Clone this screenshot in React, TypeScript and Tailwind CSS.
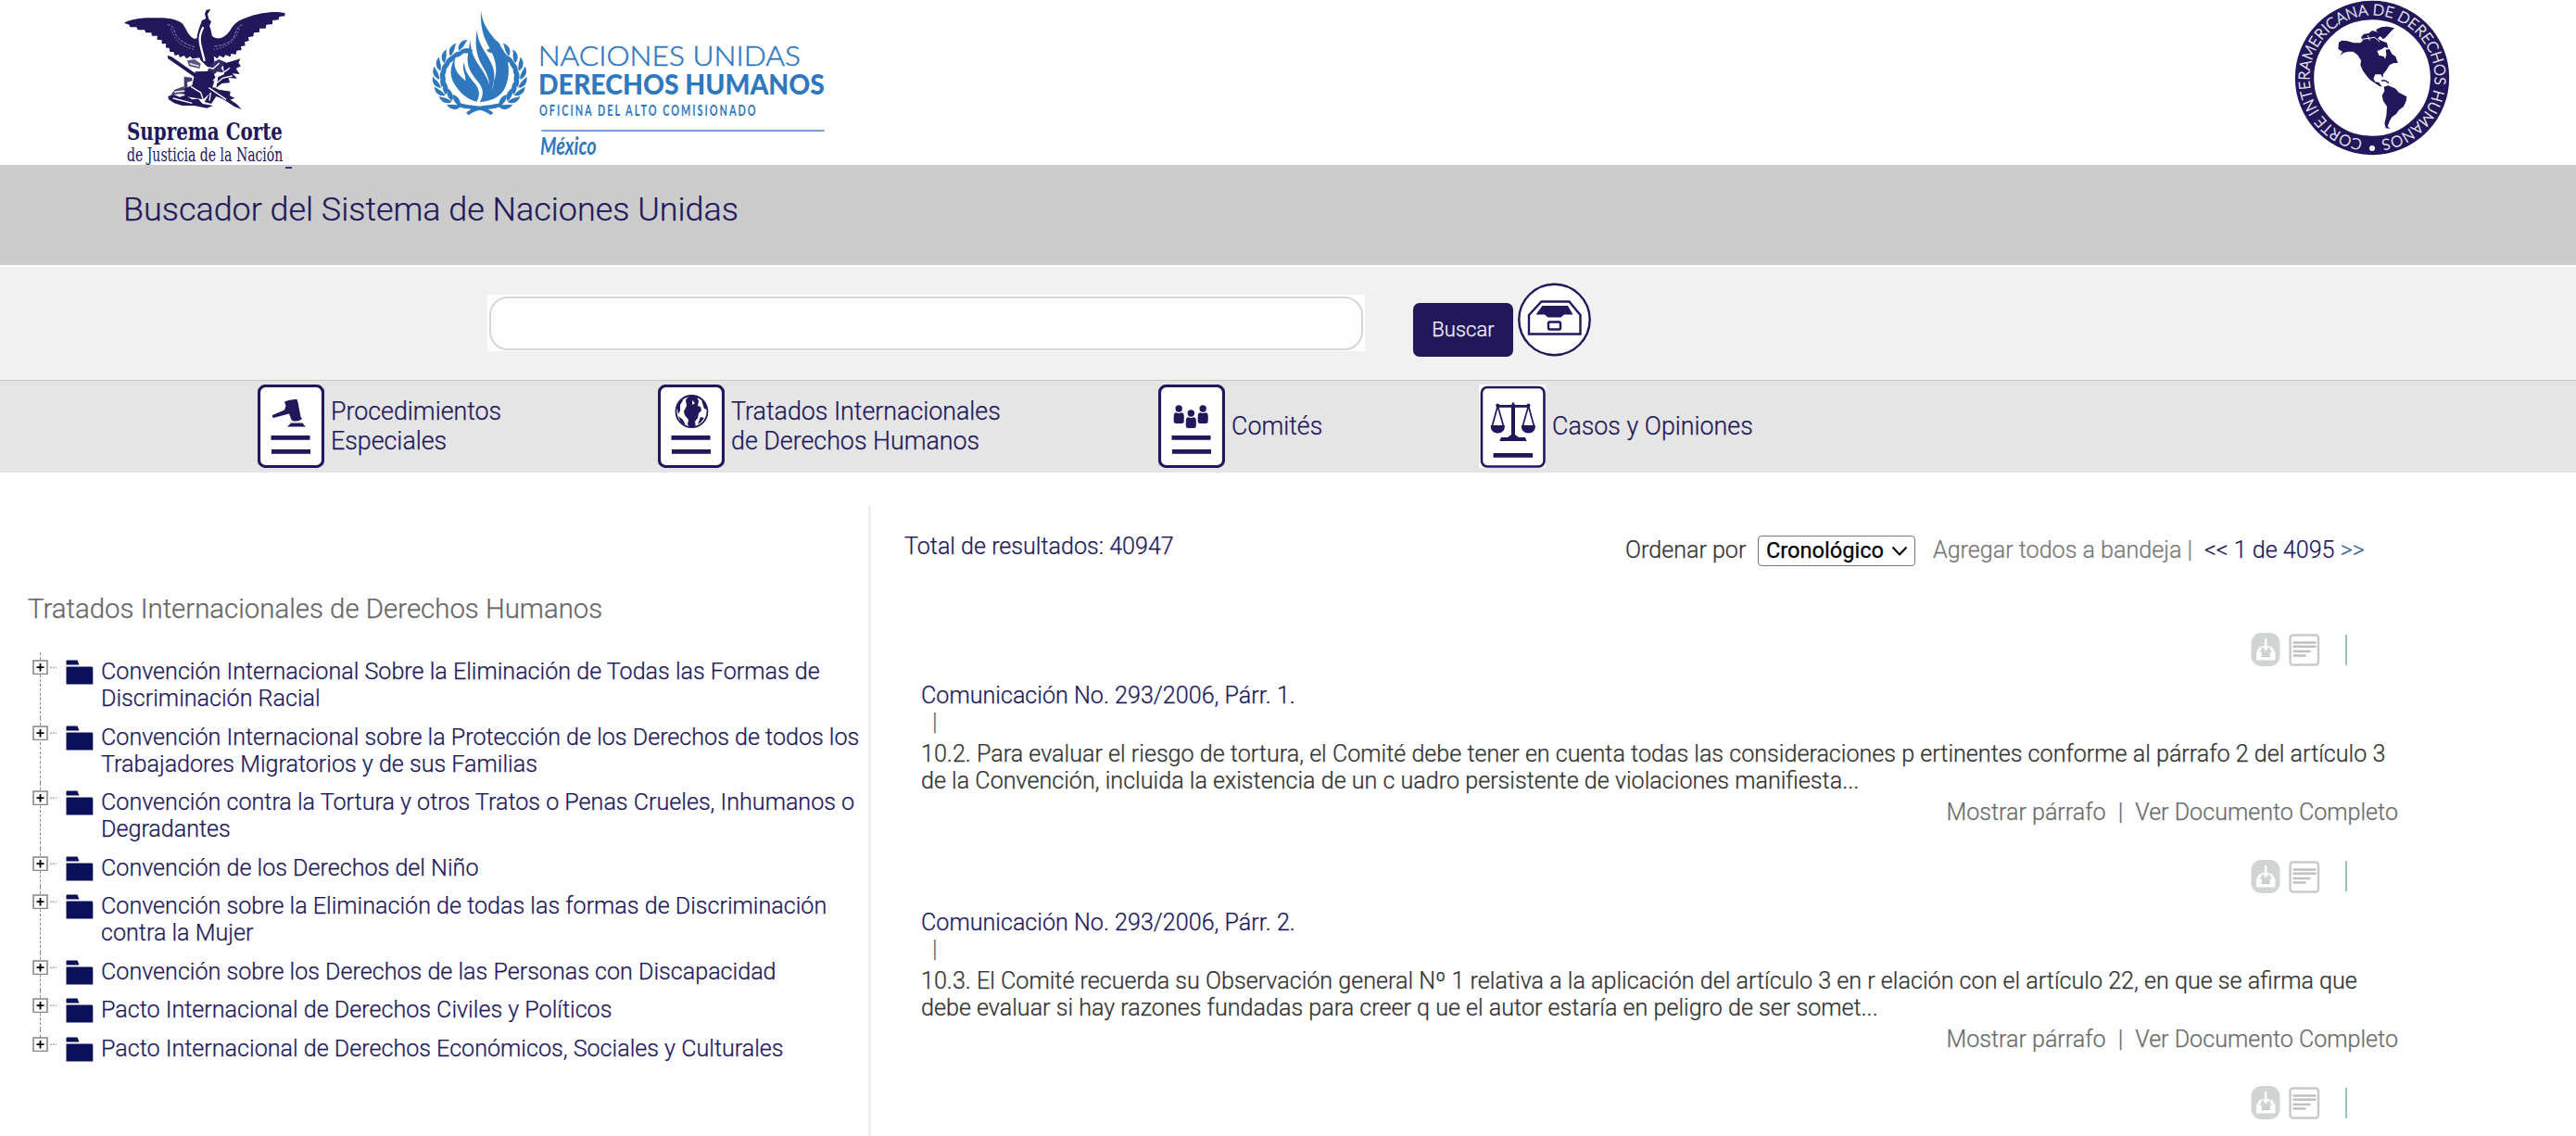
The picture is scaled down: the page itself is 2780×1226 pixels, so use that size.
import React from "react";

const NAVY = "#21175a";
const UN_BLUE = "#2f78bd";

function EagleLogo() {
  return (
    <svg className="block h-[178px] w-[200px] overflow-visible" viewBox="0 0 600 534" fill={NAVY}>
      <path d="M42,74 C60,62 100,56 150,58 C185,58 215,62 232,78 C242,92 246,106 256,116 C268,130 280,128 288,112 L292,186 L262,190 L256,182 L244,190 L236,180 L222,186 L218,176 L206,180 L202,168 L190,168 L188,156 L176,154 L178,142 L164,142 L164,130 L148,128 L150,116 L132,116 L130,106 L112,106 L108,97 L86,97 L82,88 L62,88 L58,80Z" />
      <path d="M563,43 C530,34 480,42 440,56 C412,66 396,76 388,94 C380,108 368,120 352,124 C338,126 326,120 320,108 L326,178 L344,190 L350,180 L364,187 L370,178 L386,184 L388,174 L404,176 L406,164 L422,162 L420,150 L434,148 L432,136 L446,132 L444,120 L460,118 L462,106 L480,104 L480,92 L500,92 L502,80 L522,78 L522,66 L542,64 L544,54 L562,52Z" />
      <path d="M322,30 L308,32 L303,44 L307,60 L294,66 L286,88 C274,120 272,160 290,196 L318,222 L334,198 C330,160 330,110 318,84 L324,70 L316,62 L312,46Z" />
      <path d="M298,88 C276,130 292,150 302,198" fill="none" stroke="#fff" strokeWidth="7" />
      <g fill="none" stroke="#8f88b2" strokeWidth="3">
        <path d="M182,80 C210,82 200,110 220,126 C236,140 250,146 270,152" strokeDasharray="10 4" />
        <path d="M194,92 C204,130 226,150 268,160" strokeDasharray="5 5" />
        <path d="M424,80 C398,90 408,116 386,132 C372,144 356,148 334,150" strokeDasharray="10 4" />
        <path d="M414,92 C404,132 376,154 332,160" strokeDasharray="5 5" />
      </g>
      <path d="M182,180 L196,184 L276,240 L270,250 L184,190Z" />
      <path d="M272,232 L326,230 L338,250 L322,300 L298,322 L240,312 L232,290 L262,276Z" />
      <path d="M236,248 L262,252 L262,262 L246,266 L248,286 L236,290Z" fillOpacity=".85" />
      <path d="M184,312 L202,306 L222,314 L240,308 L262,322 L282,320 L296,336 L330,342 L310,350 L268,342 L230,342 L204,334 L186,322Z" />
      <path d="M206,290 L234,280 L244,306 L220,304 L192,308Z" fillOpacity=".8" />
      <path d="M246,196 L270,192 L290,206 L286,222 L252,214Z" fillOpacity=".75" />
      <path d="M326,204 L348,192 L372,202 L356,220 L366,236 L344,232 L322,250 L312,228Z" fillOpacity=".9" />
      <path d="M362,206 L384,200 L418,190 L412,204 L420,214 L404,222 L416,240 L392,238 L408,254 L380,252 L384,268 L358,270 L340,284 L346,250 L366,240Z" />
      <path d="M332,282 L348,290 L386,296 L384,310 L400,318 L376,326 L340,312 L324,336 L302,330 L318,304Z" />
      <path d="M318,276 L408,338 L422,354 L400,346 L312,288Z" />
      <path
        d="M258,280 L290,300 L300,330 M316,284 L372,322 M330,262 C346,240 360,240 384,220 M254,206 L284,214 M298,216 L330,222 L350,204 M340,270 L362,252 L392,246 M204,298 L238,294 M200,318 L262,334 M322,300 L318,326"
        fill="none"
        stroke="#fff"
        strokeWidth="4"
      />
      <text x="51" y="452" textLength="504" lengthAdjust="spacingAndGlyphs" fontSize="78" fontWeight="700" fontFamily="DejaVu Serif, serif">Suprema Corte</text>
      <text x="51" y="521" textLength="505" lengthAdjust="spacingAndGlyphs" fontSize="62" fontWeight="400" fontFamily="DejaVu Serif, serif">de Justicia de la Nación</text>
    </svg>
  );
}

const LAUREL = [-62, -47, -32, -17, -2, 13, 28, 43, 58];

function LaurelBranch() {
  return (
    <g>
      {LAUREL.map((a) => {
        const t = (a * Math.PI) / 180;
        const x = -Math.cos(t) * 134;
        const y = Math.sin(t) * 108;
        return (
          <g key={a} transform={`translate(${x} ${y}) rotate(${-a})`}>
            <path d="M4,8 C-18,2 -22,-18 -14,-34 C-8,-20 2,-14 4,8Z" />
            <path d="M6,6 C2,-14 10,-26 24,-34 C28,-18 22,0 6,6Z" />
          </g>
        );
      })}
      <path d="M-74,88 C-40,110 0,90 36,120 L44,112 C10,82 -30,94 -74,78Z" />
    </g>
  );
}

function UnLogo() {
  return (
    <svg className="block h-[178px] w-[434px] overflow-visible" viewBox="1030 0 1302 534" fill={UN_BLUE}>
      <g transform="translate(1194 253)">
        <LaurelBranch />
        <g transform="scale(-1 1)">
          <LaurelBranch />
        </g>
      </g>
      <path d="M1198,33 C1203,95 1248,125 1272,165 C1296,210 1290,262 1272,292 C1256,318 1225,328 1194,331 C1225,310 1240,288 1240,262 C1254,230 1246,190 1226,155 C1206,120 1196,90 1198,33Z" />
      <path d="M1185,97 C1188,150 1226,180 1238,222 C1246,250 1238,270 1234,290 L1222,300 C1232,262 1216,236 1202,212 C1182,180 1178,140 1185,97Z" />
      <path d="M1164,128 C1163,180 1190,206 1208,236 C1222,260 1228,275 1226,290 L1244,300 L1194,331 C1212,300 1202,280 1186,262 C1166,236 1150,215 1156,176 C1158,158 1162,145 1164,128Z" />
      <path d="M1115,185 C1106,225 1124,240 1148,262 C1150,238 1134,228 1144,202 C1146,236 1162,250 1180,272 C1196,292 1194,312 1184,329 C1150,322 1122,292 1106,260 C1094,232 1104,205 1115,185Z" />
      <text x="1383" y="212" textLength="850" lengthAdjust="spacingAndGlyphs" fontSize="91" fontWeight="300" stroke={UN_BLUE} strokeWidth="1.5" fontFamily="Lato, sans-serif">NACIONES UNIDAS</text>
      <text x="1384" y="305" textLength="927" lengthAdjust="spacingAndGlyphs" fontSize="90" fontWeight="900" fontFamily="Lato, sans-serif">DERECHOS HUMANOS</text>
      <g transform="translate(1387 376) scale(.64 1)">
        <text textLength="1095" fontSize="51" fontWeight="700" fontFamily="Lato, sans-serif">OFICINA DEL ALTO COMISIONADO</text>
      </g>
      <rect x="1394" y="421" width="916" height="4" />
      <text x="1390" y="502" textLength="182" lengthAdjust="spacingAndGlyphs" fontSize="78" fontWeight="700" fontStyle="italic" fontFamily="Lato, sans-serif">México</text>
    </svg>
  );
}

const AMERICAS_NORTH =
  "M252,138 L262,132 L280,134 L300,140 L322,140 L330,132 L324,122 L332,112 L350,108 L360,100 L374,104 L388,116 L378,126 L392,134 L408,140 L412,156 L400,154 L392,160 L376,166 L382,180 L398,184 L402,192 L406,178 L404,162 L416,160 L424,176 L436,184 L440,196 L444,204 L428,206 L416,212 L406,228 L396,240 L394,254 L388,242 L370,242 L364,256 L370,266 L382,268 L392,282 L384,280 L366,268 L352,258 L340,244 L330,230 L322,212 L324,196 L312,178 L298,168 L282,168 L268,172 L256,180 L264,168 L250,160Z";
const AMERICAS_SOUTH =
  "M398,282 L412,278 L436,288 L446,300 L472,314 L470,328 L462,346 L446,358 L438,370 L424,380 L416,394 L410,410 L418,418 L404,416 L400,400 L406,376 L408,346 L396,328 L392,310 L400,296Z";

function CourtSeal() {
  return (
    <svg className="block h-[170px] w-[170px] overflow-visible" viewBox="105 -2 510 510">
      <circle cx="360" cy="253" r="219" fill="none" stroke={NAVY} strokeWidth="61" />
      <path d={AMERICAS_NORTH} fill={NAVY} />
      <path d={AMERICAS_SOUTH} fill={NAVY} />
      <path d="M372,98 C390,84 412,86 432,92 L420,104 L404,122 L396,128 L382,114Z" fill={NAVY} />
      <path d="M390,262 L402,262 L414,270" fill="none" stroke={NAVY} strokeWidth="4" />
      <path d="M328,128 L368,122 L384,136 M346,116 L352,132" fill="none" stroke="#fff" strokeWidth="3" />
      <path id="seal-ring" d="M360,456 A203,203 0 0 1 360,50 A203,203 0 0 1 360,456" fill="none" />
      <text fontSize="49" fontFamily="Lato, sans-serif" fill="#e9e7f0" stroke="#e9e7f0" strokeWidth="1.5">
        <textPath href="#seal-ring" startOffset="31" textLength="1215">CORTE INTERAMERICANA DE DERECHOS HUMANOS</textPath>
      </text>
      <circle cx="360" cy="481" r="9" fill="#fff" />
    </svg>
  );
}

function DocFrame({ children }: { children: React.ReactNode }) {
  return (
    <svg className="block h-[90px] w-[72px] shrink-0" viewBox="0 0 72 90" fill={NAVY}>
      <rect x="1.5" y="1.5" width="69" height="87" rx="7" fill="#fff" stroke={NAVY} strokeWidth="3.2" />
      {children}
      <rect x="14.5" y="55" width="42" height="4.8" />
      <rect x="15" y="70" width="42" height="4.8" />
    </svg>
  );
}

function GavelIcon() {
  return (
    <DocFrame>
      <path d="M16,33 L29,27.5 L30.5,23 L29,18.5 Q35,15.5 42.5,16 L43.5,19 L46.5,35 L48,37 Q45,40 38.5,39.5 L36.5,38 L34,31.500 L17,36 Q15.5,35 16,33Z" />
      <path d="M36,41.5 H48.5 L49.5,43 L52,45.5 H32 L34.5,43Z" />
    </DocFrame>
  );
}

function GlobeIcon() {
  return (
    <DocFrame>
      <circle cx="36.5" cy="29" r="17" fill="#fff" stroke={NAVY} strokeWidth="1.8" />
      <path d="M36,12 L42,13 L44,18 L43,23 L46,24 L47,28 L44,31 L43,36 L40,40 L41,46 L34,46 L32,43 L33,38 L29,33 L28,29 L31,23 L30,17 L32,14Z" />
      <path d="M20.5,24 L25,15 L27,17 L24,22 L24,28 L22,32Z M22,34 L27,38 L30,44 L25,41Z M47,17 L51,20 L53,27 L50,26Z M46,35 L50,36 L46,41 L43,43Z" />
      <path d="M37,17 L40,20 L37,22Z" fill="#fff" />
    </DocFrame>
  );
}

function Person({ x, y }: { x: number; y: number }) {
  return (
    <g transform={`translate(${x} ${y})`}>
      <circle cx="0" cy="0" r="3.7" />
      <path d="M-5.500,14 V8 Q-5.5,4.5 -2.5,4.2 Q0,6 2.5,4.2 Q5.5,4.5 5.5,8 V14 Q5.5,16 3,16 H-3 Q-5.5,16 -5.5,14Z" />
    </g>
  );
}

function CommitteeIcon() {
  return (
    <DocFrame>
      <Person x={22.2} y={26} />
      <Person x={48.2} y={26} />
      <Person x={35.3} y={31} />
    </DocFrame>
  );
}

function ScalesIcon() {
  return (
    <svg className="block h-[90px] w-[72px] shrink-0 bg-white" viewBox="0 0 72 90" fill={NAVY}>
      <rect x="3" y="3" width="67.5" height="85.5" rx="6" fill="#fff" stroke={NAVY} strokeWidth="2.6" />
      <path d="M35,22 L37,18.5 L39,22 V54 L43,57 H50 L51.5,61 H22.3 L24,57 H31 L35,54Z" />
      <rect x="19" y="22" width="36" height="2.8" />
      <path d="M20.3,23 L14.3,45 M20.3,23 L26.6,45 M53.5,23 L47.3,45 M53.5,23 L59.5,45" fill="none" stroke={NAVY} strokeWidth="1.7" />
      <circle cx="20.3" cy="22.5" r="2" />
      <circle cx="53.5" cy="22.5" r="2" />
      <path d="M12.7,44 H28 Q28,52.5 20.3,52.5 Q12.7,52.5 12.7,44Z M45.8,44 H61 Q61,52.5 53.5,52.5 Q45.8,52.5 45.8,44Z" />
      <rect x="15.6" y="74" width="42.5" height="4.8" />
    </svg>
  );
}

function TrayIcon() {
  return (
    <svg className="block h-[80px] w-[80px]" viewBox="0 0 80 80" fill="none" stroke={NAVY} strokeWidth="2.4">
      <circle cx="39.5" cy="40" r="38.2" fill="#fff" />
      <path d="M12,35 L25.5,20.5 H55.5 L67.5,35 V55.5 H12Z" />
      <path d="M26.5,25 H54 L59.5,34.5 H50 L46.5,37.5 H32.5 L29,34.5 H19.5Z" fill={NAVY} stroke="none" />
      <rect x="33" y="42.5" width="13" height="8" rx="1.5" />
    </svg>
  );
}

function ResultIcons() {
  return (
    <div className="flex h-[36px] items-center pl-[1489px]">
      <svg className="h-[36px] w-[32px]" viewBox="0 0 32 36">
        <rect x="0.5" y="0" width="31" height="36" rx="11" fill="#d0d5d4" />
        <path d="M9.5,15 L6,21 V29.5 H26.5 V21 L23,15 H20 L22.5,21 H20.5 V25 H12 V21 H9.5 L12.5,15Z" fill="#fff" />
        <path d="M15,6 H17.5 V14 H20.5 L16.3,19.5 L12,14 H15Z" fill="#fff" />
        <path d="M11.5,23 H21 M11.5,25.5 H21" stroke="#c0c6c5" strokeWidth="1.2" />
      </svg>
      <svg className="ml-[9px] h-[36px] w-[34px]" viewBox="0 0 34 36">
        <rect x="1.5" y="2.5" width="30.5" height="32" rx="3" fill="#fff" stroke="#c9c9c9" strokeWidth="2.4" />
        <path d="M4.5,10.5 H29.5 M4.5,14.8 H29.5 M4.5,20 H23.5 M4.5,24.5 H18.5" stroke="#c0c0c0" strokeWidth="2.5" />
      </svg>
      <div className="ml-[27px] h-[33px] w-[2px] bg-[#9cc2c4]" />
    </div>
  );
}

const TREE: string[][] = [
  ["Convención Internacional Sobre la Eliminación de Todas las Formas de", "Discriminación Racial"],
  ["Convención Internacional sobre la Protección de los Derechos de todos los", "Trabajadores Migratorios y de sus Familias"],
  ["Convención contra la Tortura y otros Tratos o Penas Crueles, Inhumanos o", "Degradantes"],
  ["Convención de los Derechos del Niño"],
  ["Convención sobre la Eliminación de todas las formas de Discriminación", "contra la Mujer"],
  ["Convención sobre los Derechos de las Personas con Discapacidad"],
  ["Pacto Internacional de Derechos Civiles y Políticos"],
  ["Pacto Internacional de Derechos Económicos, Sociales y Culturales"],
];

function TreeItem({ lines, last }: { lines: string[]; last: boolean }) {
  return (
    <li className="relative flex items-start pt-[6px] pb-[6.5px] pl-[35px]">
      <div
        className={
          last
            ? "absolute top-0 left-[43px] h-[9px] border-l border-dashed border-[#888]"
            : "absolute top-0 left-[43px] h-full border-l border-dashed border-[#888]"
        }
      />
      <svg className="relative mt-[2px] h-[16px] w-[26px] shrink-0" viewBox="0 0 26 16">
        <rect x="1" y="1" width="15" height="14.5" fill="#fff" stroke="#8a8a8a" strokeWidth="1.6" />
        <path d="M4.5,8.2 H12.5 M8.5,4 V12.5" stroke="#000" strokeWidth="1.8" />
        <path d="M19,8.2 H26" stroke="#888" strokeWidth="1" strokeDasharray="2 1" />
      </svg>
      <svg className="mt-[2px] ml-[10px] h-[27px] w-[30px] shrink-0" viewBox="0 0 30 27" fill="#0b1158">
        <path d="M0.5,1.5 Q0.5,0.5 1.5,0.5 H12.5 L14.5,5.5 H0.5Z" />
        <path d="M0.5,7.5 H28 Q29.3,7.5 29.3,9 V26.5 H0.5Z" />
      </svg>
      <div className="ml-[8px] text-[25.12px] leading-[29px] whitespace-nowrap text-[#21175a]">
        {lines.map((l) => (
          <div key={l}>{l}</div>
        ))}
      </div>
    </li>
  );
}

function Result({ title, lines }: { title: string; lines: string[] }) {
  return (
    <article className="h-[244.5px]">
      <ResultIcons />
      <div className="mt-[17px] pl-[54px] text-[25.14px] leading-[29px] whitespace-nowrap text-[#333]">
        <div className="text-[#21175a]">{title}</div>
        <div className="h-[34px] pl-[12px] text-[#666]">|</div>
        {lines.map((l) => (
          <div key={l}>{l}</div>
        ))}
      </div>
      <div className="mt-[5px] flex w-[1648px] justify-end gap-[13px] text-[25.1px] leading-[29px] whitespace-nowrap text-[#6b6b6b]">
        <span>Mostrar párrafo</span>
        <span>|</span>
        <span>Ver Documento Completo</span>
      </div>
    </article>
  );
}

export default function App() {
  return (
    <div className="h-[1226px] w-[2780px] overflow-hidden bg-white font-['Roboto',sans-serif] font-light [-webkit-text-stroke:0.25px]">
      <header className="flex h-[178px] items-start pl-[120px] [-webkit-text-stroke:0]">
        <EagleLogo />
        <div className="ml-[143px]">
          <UnLogo />
        </div>
        <div className="mt-[-1px] ml-[1578px]">
          <CourtSeal />
        </div>
      </header>

      <div className="relative h-[108px] bg-[#ccc] pt-[26px] pl-[133px]">
        <span className="absolute top-[2px] left-[308px] h-[2px] w-[7px] bg-[#4b2a85]" />
        <h1 className="text-[35.9px] leading-[44px] text-[#21175a]">Buscador del Sistema de Naciones Unidas</h1>
      </div>

      <div className="mt-[2px] flex h-[122px] items-start bg-[#f1f1f1] pl-[526px]">
        <div className="mt-[30px] h-[61px] w-[947px] bg-white p-[2px]">
          <input className="block h-[58px] w-[943px] rounded-[20px] border-2 border-[#d6d6d6] bg-[#fefefe] px-5 text-2xl outline-none" />
        </div>
        <button className="mt-[39px] ml-[52px] h-[58px] w-[108px] rounded-[7px] bg-[#21175a] text-[22px] leading-[58px] text-[#f4f3f8]">Buscar</button>
        <div className="mt-[17px] ml-[5px]">
          <TrayIcon />
        </div>
      </div>

      <nav className="flex h-[100px] items-start border-t border-[#c6c6c6] bg-[#e5e5e5] pt-[4px] pl-[278px] text-[26.8px] leading-[32px] whitespace-nowrap text-[#21175a]">
        <a className="flex w-[432px] items-center gap-[7px]"><GavelIcon /><span>Procedimientos<br />Especiales</span></a>
        <a className="flex w-[540px] items-center gap-[7px]"><GlobeIcon /><span>Tratados Internacionales<br />de Derechos Humanos</span></a>
        <a className="flex w-[346px] items-center gap-[7px]"><CommitteeIcon /><span>Comités</span></a>
        <a className="flex items-center gap-[7px]"><ScalesIcon /><span>Casos y Opiniones</span></a>
      </nav>

      <main className="mt-[36px] flex h-[680px]">
        <aside className="w-[940px] shrink-0 border-r-[3px] border-[#f0f0f0]">
          <h2 className="mt-[93px] pl-[30px] text-[29.4px] leading-[36px] text-[#666]">Tratados Internacionales de Derechos Humanos</h2>
          <ul className="mt-[29px]">
            {TREE.map((lines, i) => (
              <TreeItem key={lines[0]} lines={lines} last={i === TREE.length - 1} />
            ))}
          </ul>
        </aside>
        <section className="w-[1700px] shrink-0">
          <div className="flex h-[137px] items-start pt-[29px] pl-[36px] text-[25.1px] leading-[29px] whitespace-nowrap">
            <div className="w-[778px] text-[#21175a]">Total de resultados: 40947</div>
            <div className="mt-[4px] w-[143px] text-[#333]">Ordenar por</div>
            <div className="mt-[3px] flex h-[33px] w-[170px] items-center justify-between rounded-[4px] border border-[#767676] bg-white pr-[7px] pl-[8px] text-[23.6px] font-normal text-black">
              <span>Cronológico</span>
              <svg className="h-[12px] w-[18px]" viewBox="0 0 18 12" fill="none" stroke="#000" strokeWidth="2"><path d="M1.5,1.5 L9,9.5 L16.5,1.5" /></svg>
            </div>
            <div className="mt-[4px] ml-[19px] w-[293px] text-[#777]">Agregar todos a bandeja |</div>
            <div className="mt-[4px] text-[#21175a]">&lt;&lt; 1 de 4095 <span className="text-[#3a6592]">&gt;&gt;</span></div>
          </div>
          <Result
            title="Comunicación No. 293/2006, Párr. 1."
            lines={[
              "10.2. Para evaluar el riesgo de tortura, el Comité debe tener en cuenta todas las consideraciones p ertinentes conforme al párrafo 2 del artículo 3",
              "de la Convención, incluida la existencia de un c uadro persistente de violaciones manifiesta...",
            ]}
          />
          <Result
            title="Comunicación No. 293/2006, Párr. 2."
            lines={[
              "10.3. El Comité recuerda su Observación general Nº 1 relativa a la aplicación del artículo 3 en r elación con el artículo 22, en que se afirma que",
              "debe evaluar si hay razones fundadas para creer q ue el autor estaría en peligro de ser somet...",
            ]}
          />
          <ResultIcons />
        </section>
      </main>
    </div>
  );
}
